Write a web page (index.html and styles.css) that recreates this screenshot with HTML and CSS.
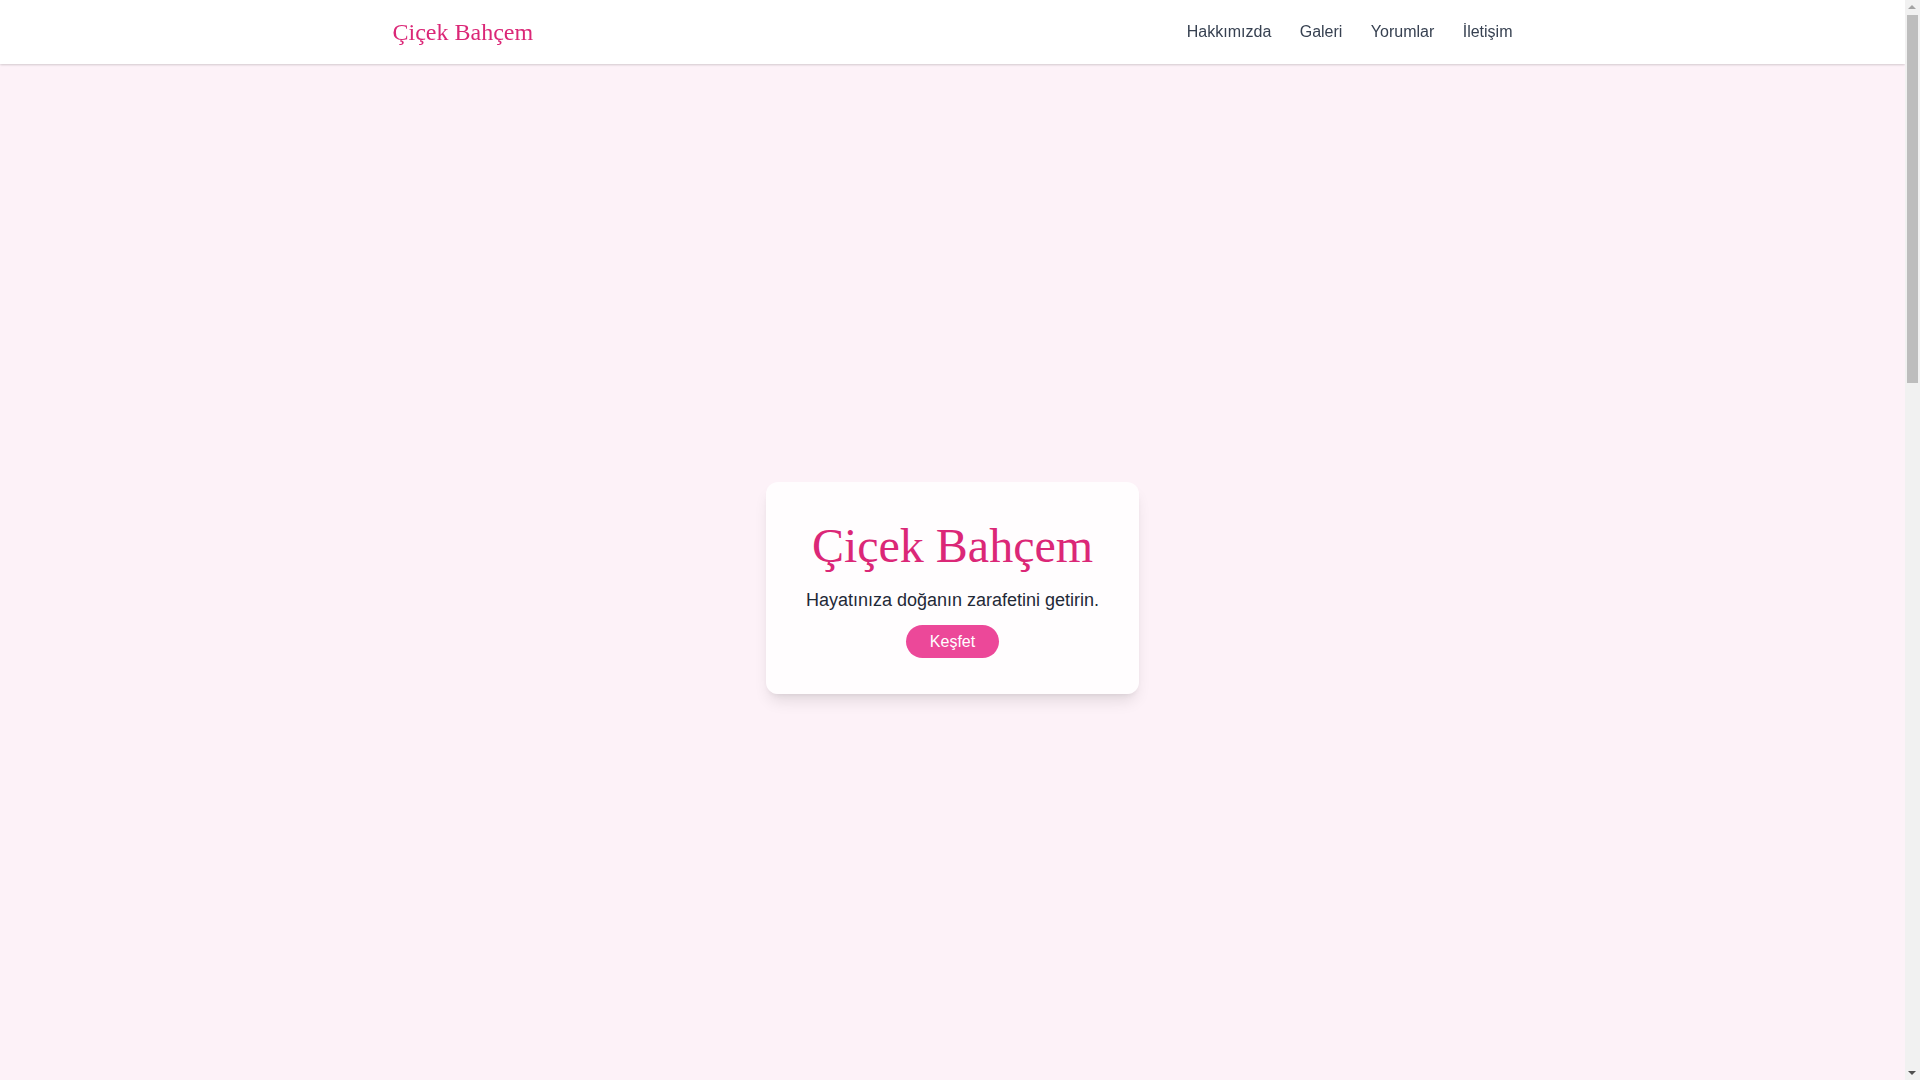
FILE: index.html
```html
<!DOCTYPE html>
<html lang="tr">
<head>
<meta charset="utf-8">
<title>Çiçek Bahçem</title>
<link rel="stylesheet" href="styles.css">
</head>
<body>
<header class="site-header">
  <div class="container header-inner">
    <a class="logo" href="#">Çiçek Bahçem</a>
    <nav class="nav">
      <a href="#hakkimizda">Hakkımızda</a>
      <a href="#galeri">Galeri</a>
      <a href="#yorumlar">Yorumlar</a>
      <a href="#iletisim">İletişim</a>
    </nav>
  </div>
</header>
<main class="page">
  <section class="hero">
    <div class="hero-card">
      <h1 class="hero-title">Çiçek Bahçem</h1>
      <p class="hero-text">Hayatınıza doğanın zarafetini getirin.</p>
      <div class="hero-action"><a class="btn" href="#galeri">Keşfet</a></div>
    </div>
  </section>
  <section id="hakkimizda" class="section s-about"></section>
  <section id="galeri" class="section s-gallery"></section>
  <section id="yorumlar" class="section s-reviews"></section>
  <section id="iletisim" class="section s-contact"></section>
</main>
<div class="scrollbar" aria-hidden="true">
  <span class="sb-arrow sb-up"></span>
  <span class="sb-thumb"></span>
  <span class="sb-arrow sb-down"></span>
</div>
</body>
</html>
```
FILE: styles.css
```css
* { box-sizing: border-box; }
html, body { margin: 0; padding: 0; }
body {
  background: #fdf2f8;
  font-family: "Liberation Sans", Arial, sans-serif;
  font-size: 16px;
  line-height: 1.5;
  color: #1f2937;
}
a { text-decoration: none; }
.container {
  max-width: 1152px;
  margin: 0 auto;
  padding: 0 16px;
}
.site-header {
  position: fixed;
  top: 0;
  left: 0;
  right: 15px;
  z-index: 10;
  background: #ffffff;
  box-shadow: 0 1px 2px rgba(0, 0, 0, 0.12), 0 1px 3px rgba(0, 0, 0, 0.06);
}
.header-inner {
  height: 64px;
  display: flex;
  align-items: center;
  justify-content: space-between;
}
.logo {
  font-family: "Liberation Serif", "Times New Roman", serif;
  font-size: 24px;
  line-height: 32px;
  color: #db2777;
}
.nav {
  display: flex;
  gap: 28.45px;
}
.nav a {
  color: #374151;
  font-size: 16px;
  line-height: 24px;
}
.page { margin-right: 15px; }
.hero {
  height: 1080px;
  padding-top: 96px;
  display: flex;
  align-items: center;
  justify-content: center;
}
.hero-card {
  background: rgba(255, 255, 255, 0.8);
  border-radius: 12px;
  padding: 40px;
  text-align: center;
  box-shadow: 0 10px 15px -3px rgba(0, 0, 0, 0.1), 0 4px 6px -4px rgba(0, 0, 0, 0.1);
}
.hero-title {
  margin: 0 0 16px;
  font-family: "Liberation Serif", "Times New Roman", serif;
  font-weight: 400;
  font-size: 48px;
  line-height: 1;
  color: #db2777;
}
.hero-text {
  margin: 0 0 16px;
  font-size: 18px;
  line-height: 28px;
  color: #1f2937;
}
.hero-action { line-height: 24px; }
.btn {
  background: #ec4899;
  color: #ffffff;
  padding: 8px 24px;
  border-radius: 9999px;
}
.s-about { height: 500px; }
.s-gallery { height: 600px; }
.s-reviews { height: 500px; }
.s-contact { height: 400px; }

/* drawn browser scrollbar */
.scrollbar {
  position: fixed;
  top: 0;
  right: 0;
  width: 15px;
  height: 100vh;
  background: #f1f1f1;
  z-index: 20;
}
.sb-thumb {
  position: absolute;
  top: 15px;
  left: 2px;
  width: 11px;
  height: 368px;
  background: #bdbdbd;
}
.sb-arrow {
  position: absolute;
  left: 3px;
  width: 0;
  height: 0;
  border-left: 4.5px solid transparent;
  border-right: 4.5px solid transparent;
}
.sb-up {
  top: 5px;
  border-bottom: 4.5px solid #a3a3a3;
}
.sb-down {
  bottom: 5px;
  border-top: 4.5px solid #505050;
}
```
